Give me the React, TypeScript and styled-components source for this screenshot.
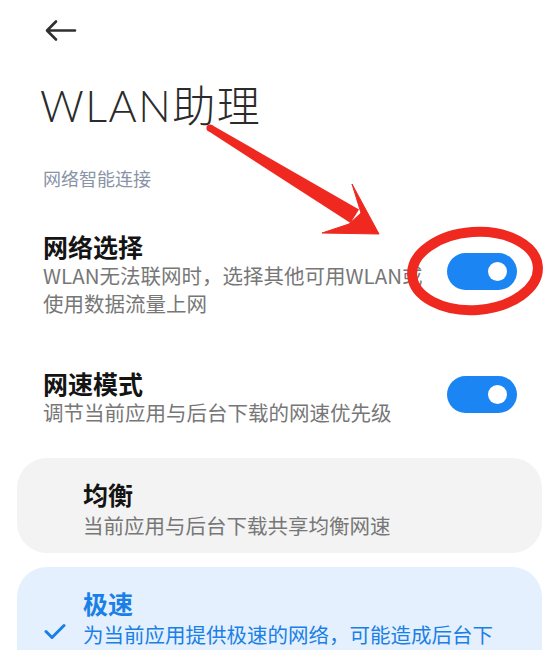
import React from "react";
import styled, { createGlobalStyle } from "styled-components";

const GlobalStyle = createGlobalStyle`
  html, body { margin: 0; padding: 0; background: #ffffff; }
  body {
    font-family: "Noto Sans CJK SC", "Noto Sans", sans-serif;
    -webkit-font-smoothing: antialiased;
  }
  * { box-sizing: border-box; }
`;

const Page = styled.div`
  position: relative;
  width: 558px;
  height: 650px;
  overflow: hidden;
  background: #ffffff;
  display: flex;
  flex-direction: column;
  & > * { flex-shrink: 0; }
`;

const Header = styled.div`
  height: 60px;
  padding: 18px 0 0 44px;
  display: flex;
  align-items: flex-start;
`;

const BackButton = styled.button`
  border: none;
  background: transparent;
  padding: 0;
  width: 33px;
  height: 24px;
  display: flex;
  align-items: center;
  cursor: pointer;
`;

const PageTitle = styled.h1`
  margin: 21px 0 0 40px;
  font-family: "Lato", "Noto Sans CJK SC", sans-serif;
  font-size: 43px;
  line-height: 50px;
  font-weight: 300;
  color: #2b2b2b;
  letter-spacing: 1.5px;
`;

const SectionLabel = styled.div`
  margin: 35px 0 0 43px;
  font-size: 18px;
  line-height: 24px;
  color: #8a93a6;
`;

const Row = styled.div<{ $top: number }>`
  margin-top: ${(p) => p.$top}px;
  padding: 0 41px 0 43px;
  display: flex;
  align-items: center;
  gap: 12px;
`;

const RowText = styled.div`
  flex: 1;
  min-width: 0;
`;

const RowTitle = styled.div`
  font-size: 25px;
  line-height: 30px;
  font-weight: 700;
  color: #141414;
`;

const RowSub = styled.div`
  margin-top: 1px;
  font-size: 20.5px;
  line-height: 27.5px;
  color: #777777;
`;

const Switch = styled.div<{ $on: boolean }>`
  flex: none;
  width: 70px;
  height: 37px;
  margin-bottom: 5px;
  border-radius: 19px;
  background: ${(p) => (p.$on ? "#1b85f3" : "#d9d9d9")};
  display: flex;
  align-items: center;
  justify-content: ${(p) => (p.$on ? "flex-end" : "flex-start")};
  padding: 0 10px;
`;

const Knob = styled.div`
  width: 19px;
  height: 19px;
  border-radius: 50%;
  background: #ffffff;
`;

const Cards = styled.div`
  margin: 31px 16px 0 17px;
  display: flex;
  flex-direction: column;
  gap: 14px;
`;

const Card = styled.div<{ $active: boolean }>`
  border-radius: 30px;
  background: ${(p) => (p.$active ? "#e4f0fd" : "#f3f3f3")};
  display: grid;
  grid-template-columns: 66px 1fr;
  padding: 21px 48px 14px 0;
`;

const CheckSlot = styled.div`
  display: flex;
  align-items: center;
  justify-content: flex-end;
  padding-right: 17px;
`;

const CardText = styled.div``;

const CardTitle = styled.div<{ $active: boolean }>`
  font-size: 25px;
  line-height: 30px;
  font-weight: 700;
  color: ${(p) => (p.$active ? "#1a7fe6" : "#141414")};
`;

const CardSub = styled.div<{ $active: boolean }>`
  margin-top: 2px;
  font-size: 20.5px;
  line-height: 28px;
  color: ${(p) => (p.$active ? "#1a7fe6" : "#777777")};
`;

const Annotation = styled.svg`
  position: absolute;
  left: 0;
  top: 0;
  width: 558px;
  height: 650px;
  pointer-events: none;
`;

const BackIcon = () => (
  <svg width="33" height="24" viewBox="0 0 33 24" fill="none">
    <path
      d="M31 12.5H3.5M12 3.5L3 12.5L12 21.5"
      stroke="#2f2f2f"
      strokeWidth="2.6"
      strokeLinecap="round"
      strokeLinejoin="round"
    />
  </svg>
);

const CheckIcon = () => (
  <svg width="22" height="17" viewBox="0 0 22 17" fill="none">
    <path
      d="M2 8.5L8 14.5L20 2.5"
      stroke="#1a7fe6"
      strokeWidth="3"
      strokeLinecap="round"
      strokeLinejoin="round"
    />
  </svg>
);

const modes = [
  { title: "均衡", sub: "当前应用与后台下载共享均衡网速", active: false },
  {
    title: "极速",
    sub: "为当前应用提供极速的网络，可能造成后台下载速度变慢",
    active: true,
  },
];

const RED = "#ef2920";

export default function App() {
  return (
    <>
      <GlobalStyle />
      <Page>
        <Header>
          <BackButton aria-label="返回">
            <BackIcon />
          </BackButton>
        </Header>
        <PageTitle>WLAN助理</PageTitle>
        <SectionLabel>网络智能连接</SectionLabel>
        <Row $top={41}>
          <RowText>
            <RowTitle>网络选择</RowTitle>
            <RowSub>WLAN无法联网时，选择其他可用WLAN或使用数据流量上网</RowSub>
          </RowText>
          <Switch $on>
            <Knob />
          </Switch>
        </Row>
        <Row $top={51}>
          <RowText>
            <RowTitle>网速模式</RowTitle>
            <RowSub>调节当前应用与后台下载的网速优先级</RowSub>
          </RowText>
          <Switch $on>
            <Knob />
          </Switch>
        </Row>
        <Cards>
          {modes.map((m) => (
            <Card key={m.title} $active={m.active}>
              <CheckSlot>{m.active ? <CheckIcon /> : null}</CheckSlot>
              <CardText>
                <CardTitle $active={m.active}>{m.title}</CardTitle>
                <CardSub $active={m.active}>{m.sub}</CardSub>
              </CardText>
            </Card>
          ))}
        </Cards>
        <Annotation viewBox="0 0 558 650">
          <circle cx="210" cy="128" r="3.6" fill={RED} />
          <path
            d="M211.8 124.9 L359 209.5 L350.5 223 L208.2 131.1 Z"
            fill={RED}
          />
          <path
            d="M379 234 L352 184 L361 213 L349 224 L322 233 Z"
            fill={RED}
            stroke={RED}
            strokeWidth="1"
            strokeLinejoin="round"
          />
          <ellipse
            cx="475"
            cy="271"
            rx="63"
            ry="39"
            fill="none"
            stroke={RED}
            strokeWidth="10"
            transform="rotate(-4 475 271)"
          />
        </Annotation>
      </Page>
    </>
  );
}
